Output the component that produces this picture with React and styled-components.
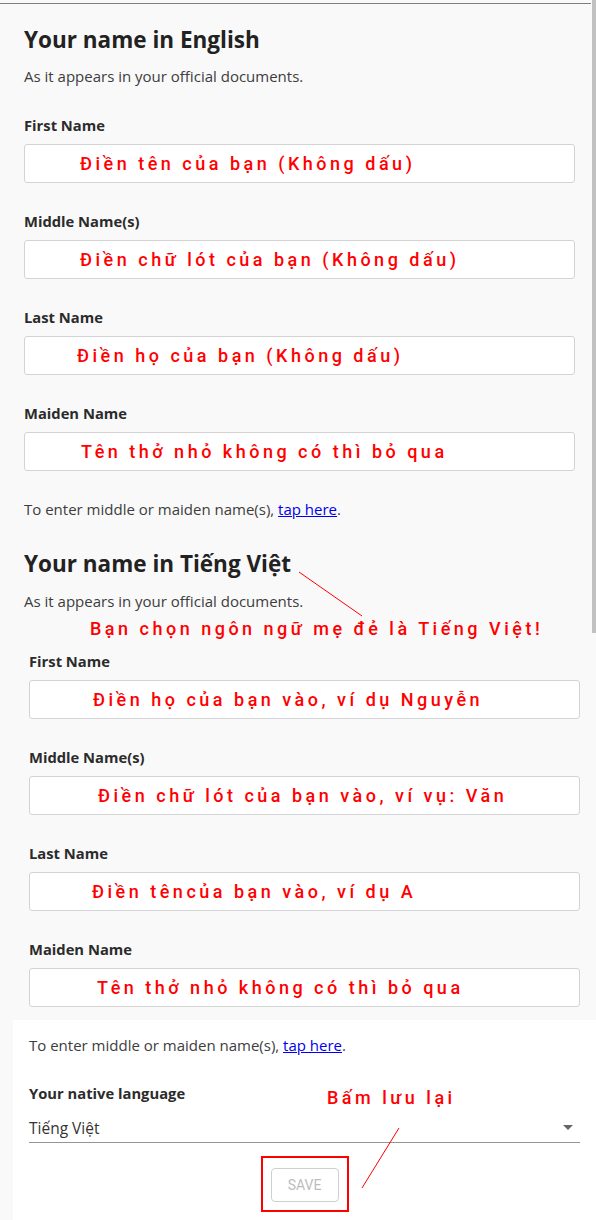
import React from "react";
import styled, { createGlobalStyle } from "styled-components";

const GlobalStyle = createGlobalStyle`
  html, body { margin: 0; padding: 0; background: #f9f9f9; }
  body { font-family: "Open Sans", "Noto Sans", sans-serif; color: #333; }
  * { box-sizing: border-box; }
`;

const Page = styled.div`
  position: relative;
  width: 596px;
  height: 1220px;
  overflow: hidden;
  background: #f9f9f9;
  padding-top: 3px;
`;

const TopRule = styled.div`
  height: 1px;
  margin-right: 5px;
  background: #7f7f7f;
`;

const ScrollThumb = styled.div`
  position: absolute;
  top: 0;
  right: 0;
  width: 4px;
  height: 633px;
  background: #c1c1c1;
`;

const Section = styled.section`
  padding: 0 ${(p) => p.$right}px 0 ${(p) => p.$left}px;
`;

const Heading = styled.h2`
  margin: ${(p) => p.$top}px 0 0;
  font-size: 22.5px;
  line-height: 30px;
  font-weight: 700;
  color: #222;
`;

const Subtitle = styled.p`
  margin: ${(p) => p.$top}px 0 0;
  font-size: 15px;
  line-height: 20px;
  color: #3d3d3d;
`;

const Fields = styled.div`
  display: flex;
  flex-direction: column;
  gap: 28px;
  margin-top: ${(p) => p.$top}px;
`;

const Field = styled.div`
  display: flex;
  flex-direction: column;
  gap: 9px;
`;

const Label = styled.label`
  display: block;
  margin-top: ${(p) => p.$top || 0}px;
  font-size: 14.75px;
  line-height: 20px;
  font-weight: 700;
  color: #2b2b2b;
`;

const InputBox = styled.div`
  height: 39px;
  display: flex;
  align-items: center;
  padding-left: ${(p) => p.$indent}px;
  background: #fff;
  border: 1px solid #d3d3d3;
  border-radius: 3px;
`;

const RedNote = styled.span`
  font-family: Roboto, "Liberation Sans", sans-serif;
  font-size: 18px;
  font-weight: 500;
  letter-spacing: 3.5px;
  color: #ff0000;
  white-space: nowrap;
`;

const Annotation = styled.div`
  margin: ${(p) => p.$top}px 0 0 ${(p) => p.$left}px;
  line-height: 22px;
`;

const HelpText = styled.p`
  margin: ${(p) => p.$top}px 0 0;
  font-size: 15px;
  line-height: 20px;
  color: #3d3d3d;
`;

const Link = styled.a`
  color: #0000ee;
  text-decoration: underline;
`;

const Panel = styled.div`
  position: relative;
  margin: 13px 0 0 13px;
  background: #fff;
  padding: 15px 16px 0 16px;
  height: 200px;
`;

const Select = styled.div`
  margin-top: 10px;
  height: 30px;
  display: flex;
  align-items: center;
  justify-content: space-between;
  padding-right: 7px;
  border-bottom: 1px solid #959595;
  font-size: 15.5px;
  color: #333;
`;

const Caret = styled.span`
  width: 0;
  height: 0;
  border-left: 5px solid transparent;
  border-right: 5px solid transparent;
  border-top: 5px solid #666;
`;

const ButtonRow = styled.div`
  display: flex;
  justify-content: center;
  margin-top: 13px;
`;

const Highlight = styled.div`
  border: 2px solid #ff0000;
  padding: 10px 8px 8px 8px;
`;

const SaveButton = styled.button`
  width: 68px;
  height: 34px;
  background: #fff;
  border: 1px solid #cfcfcf;
  border-radius: 4px;
  font-family: Roboto, "Liberation Sans", sans-serif;
  font-size: 14px;
  color: #bdbdbd;
  text-transform: uppercase;
  padding: 0;
`;

const SaveNote = styled.div`
  position: absolute;
  left: 314px;
  top: 67px;
  line-height: 22px;
`;

const Overlay = styled.svg`
  position: absolute;
  top: 0;
  left: 0;
  pointer-events: none;
`;

const englishFields = [
  { label: "First Name", note: "Điền tên của bạn (Không dấu)", indent: 55 },
  { label: "Middle Name(s)", note: "Điền chữ lót của bạn (Không dấu)", indent: 55 },
  { label: "Last Name", note: "Điền họ của bạn (Không dấu)", indent: 52 },
  { label: "Maiden Name", note: "Tên thở nhỏ không có thì bỏ qua", indent: 56 },
];

const vietFields = [
  { label: "First Name", note: "Điền họ của bạn vào, ví dụ Nguyễn", indent: 63 },
  { label: "Middle Name(s)", note: "Điền chữ lót của bạn vào, ví vụ: Văn", indent: 68 },
  { label: "Last Name", note: "Điền têncủa bạn vào, ví dụ A", indent: 62 },
  { label: "Maiden Name", note: "Tên thở nhỏ không có thì bỏ qua", indent: 67 },
];

function FieldList({ items, top }) {
  return (
    <Fields $top={top}>
      {items.map((f) => (
        <Field key={f.label}>
          <Label>{f.label}</Label>
          <InputBox $indent={f.indent}>
            <RedNote>{f.note}</RedNote>
          </InputBox>
        </Field>
      ))}
    </Fields>
  );
}

export default function App() {
  return (
    <>
      <GlobalStyle />
      <Page>
        <TopRule />
        <ScrollThumb />
        <Section $left={24} $right={21}>
          <Heading $top={21}>Your name in English</Heading>
          <Subtitle $top={11}>As it appears in your official documents.</Subtitle>
          <FieldList items={englishFields} top={29} />
          <HelpText $top={28}>
            To enter middle or maiden name(s), <Link href="#">tap here</Link>.
          </HelpText>
        </Section>
        <Section $left={24} $right={16}>
          <Heading $top={30}>Your name in Tiếng Việt</Heading>
          <Subtitle $top={12}>As it appears in your official documents.</Subtitle>
        </Section>
        <Section $left={29} $right={16}>
          <Annotation $top={7} $left={61}>
            <RedNote>Bạn chọn ngôn ngữ mẹ đẻ là Tiếng Việt!</RedNote>
          </Annotation>
          <FieldList items={vietFields} top={11} />
        </Section>
        <Panel>
          <HelpText $top={0}>
            To enter middle or maiden name(s), <Link href="#">tap here</Link>.
          </HelpText>
          <Label as="div" $top={28}>Your native language</Label>
          <Select>
            <span>Tiếng Việt</span>
            <Caret />
          </Select>
          <ButtonRow>
            <Highlight>
              <SaveButton type="button">Save</SaveButton>
            </Highlight>
          </ButtonRow>
          <SaveNote>
            <RedNote>Bấm lưu lại</RedNote>
          </SaveNote>
        </Panel>
        <Overlay width="596" height="1220" viewBox="0 0 596 1220">
          <line x1="299" y1="572" x2="362" y2="616" stroke="#ff0000" strokeWidth="1" />
          <line x1="399" y1="1128" x2="362" y2="1188" stroke="#ff0000" strokeWidth="1" />
        </Overlay>
      </Page>
    </>
  );
}
